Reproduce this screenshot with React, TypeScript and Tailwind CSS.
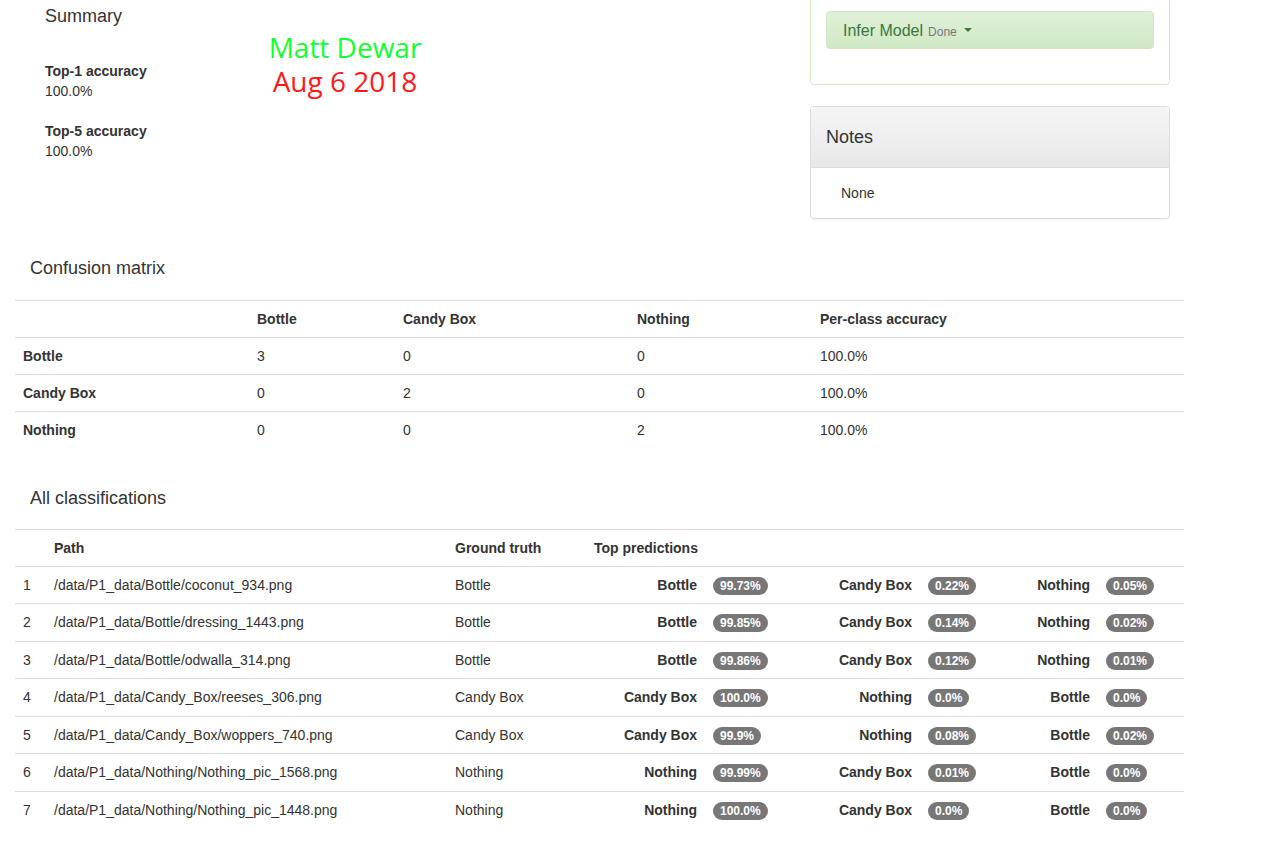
import clsx from 'clsx'

type Pred = { label: string; pct: string }
type Row = { path: string; truth: string; preds: Pred[] }

const classes = ['Bottle', 'Candy Box', 'Nothing']

const matrix = [
  [3, 0, 0],
  [0, 2, 0],
  [0, 0, 2],
]

const rows: Row[] = [
  {
    path: '/data/P1_data/Bottle/coconut_934.png',
    truth: 'Bottle',
    preds: [
      { label: 'Bottle', pct: '99.73%' },
      { label: 'Candy Box', pct: '0.22%' },
      { label: 'Nothing', pct: '0.05%' },
    ],
  },
  {
    path: '/data/P1_data/Bottle/dressing_1443.png',
    truth: 'Bottle',
    preds: [
      { label: 'Bottle', pct: '99.85%' },
      { label: 'Candy Box', pct: '0.14%' },
      { label: 'Nothing', pct: '0.02%' },
    ],
  },
  {
    path: '/data/P1_data/Bottle/odwalla_314.png',
    truth: 'Bottle',
    preds: [
      { label: 'Bottle', pct: '99.86%' },
      { label: 'Candy Box', pct: '0.12%' },
      { label: 'Nothing', pct: '0.01%' },
    ],
  },
  {
    path: '/data/P1_data/Candy_Box/reeses_306.png',
    truth: 'Candy Box',
    preds: [
      { label: 'Candy Box', pct: '100.0%' },
      { label: 'Nothing', pct: '0.0%' },
      { label: 'Bottle', pct: '0.0%' },
    ],
  },
  {
    path: '/data/P1_data/Candy_Box/woppers_740.png',
    truth: 'Candy Box',
    preds: [
      { label: 'Candy Box', pct: '99.9%' },
      { label: 'Nothing', pct: '0.08%' },
      { label: 'Bottle', pct: '0.02%' },
    ],
  },
  {
    path: '/data/P1_data/Nothing/Nothing_pic_1568.png',
    truth: 'Nothing',
    preds: [
      { label: 'Nothing', pct: '99.99%' },
      { label: 'Candy Box', pct: '0.01%' },
      { label: 'Bottle', pct: '0.0%' },
    ],
  },
  {
    path: '/data/P1_data/Nothing/Nothing_pic_1448.png',
    truth: 'Nothing',
    preds: [
      { label: 'Nothing', pct: '100.0%' },
      { label: 'Candy Box', pct: '0.0%' },
      { label: 'Bottle', pct: '0.0%' },
    ],
  },
]

const cell = 'border-t border-[#ddd] px-2 align-middle'

function Badge({ children }: { children: string }) {
  return (
    <span className="inline-block rounded-[10px] bg-[#777] px-[7px] py-[3px] text-[12px] font-bold leading-none text-white">
      {children}
    </span>
  )
}

export default function App() {
  return (
    <div className="min-h-[856px] bg-white px-[15px] font-['Liberation_Sans',Arial,sans-serif] text-[14px] leading-[20px] text-[#333]">
      <div className="flex">
        <div className="relative w-[795px]">
          <div className="pl-[30px] pt-[6px]">
            <h4 className="text-[18px] leading-[20px]">Summary</h4>
            <div className="mt-[35px]">
              <div className="font-bold">Top-1 accuracy</div>
              <div>100.0%</div>
            </div>
            <div className="mt-[20px]">
              <div className="font-bold">Top-5 accuracy</div>
              <div>100.0%</div>
            </div>
          </div>
          {/* name / date stamp */}
          <div className="absolute left-[230px] top-[30px] w-[200px] text-center font-['Open_Sans',sans-serif] text-[28px] leading-[34px]">
            <div className="text-[#12ff30]">Matt Dewar</div>
            <div className="text-[#ff1a1a]">Aug 6 2018</div>
          </div>
        </div>

        <div className="w-[360px]">
          <div className="-mt-[10px] rounded-b-[4px] border border-[#d6e9c6] px-[15px] pb-[35px] pt-[20px]">
            <div className="flex h-[38px] items-center rounded-[4px] border border-[#cfe6c4] bg-gradient-to-b from-[#dff0d8] to-[#d0e9c5] pl-[16px]">
              <span className="mt-[1px] text-[16px] text-[#3c763d]">Infer Model</span>
              <span className="ml-[5px] mt-[3px] text-[12px] text-[#777]">Done</span>
              <span className="ml-[7px] h-0 w-0 border-x-[4px] border-t-[4px] border-x-transparent border-t-[#3c763d]" />
            </div>
          </div>

          <div className="mt-[21px] overflow-hidden rounded-[4px] border border-[#ddd] shadow-[0_1px_1px_rgba(0,0,0,0.05)]">
            <div className="flex h-[61px] items-center border-b border-[#ddd] bg-gradient-to-b from-[#f5f5f5] to-[#e8e8e8] px-[15px]">
              <h3 className="text-[18px] text-[#333]">Notes</h3>
            </div>
            <div className="py-[15px] pl-[30px]">None</div>
          </div>
        </div>
      </div>

      <h4 className="mt-[39px] pl-[15px] text-[18px] leading-[20px]">Confusion matrix</h4>
      <table className="mt-[22px] w-[1169px] table-fixed border-collapse">
        <colgroup>
          <col className="w-[234px]" />
          <col className="w-[146px]" />
          <col className="w-[234px]" />
          <col className="w-[183px]" />
          <col />
        </colgroup>
        <thead>
          <tr className="h-[37px]">
            <th className={cell} />
            {classes.map((c) => (
              <th key={c} className={clsx(cell, 'text-left')}>
                {c}
              </th>
            ))}
            <th className={clsx(cell, 'text-left')}>Per-class accuracy</th>
          </tr>
        </thead>
        <tbody>
          {classes.map((c, i) => (
            <tr key={c} className="h-[37px]">
              <th className={clsx(cell, 'text-left')}>{c}</th>
              {matrix[i].map((v, j) => (
                <td key={j} className={cell}>
                  {v}
                </td>
              ))}
              <td className={cell}>100.0%</td>
            </tr>
          ))}
        </tbody>
      </table>

      <h4 className="mt-[39px] pl-[15px] text-[18px] leading-[20px]">All classifications</h4>
      <table className="mt-[21px] w-[1169px] table-fixed border-collapse">
        <colgroup>
          <col className="w-[31px]" />
          <col className="w-[401px]" />
          <col className="w-[139px]" />
          <col className="w-[119px]" />
          <col className="w-[80px]" />
          <col className="w-[135px]" />
          <col className="w-[79px]" />
          <col className="w-[99px]" />
          <col />
        </colgroup>
        <thead>
          <tr className="h-[37px]">
            <th className={cell} />
            <th className={clsx(cell, 'text-left')}>Path</th>
            <th className={clsx(cell, 'text-left')}>Ground truth</th>
            <th className={clsx(cell, 'text-left')} colSpan={6}>
              Top predictions
            </th>
          </tr>
        </thead>
        <tbody>
          {rows.map((r, i) => (
            <tr key={r.path} className="h-[37.5px]">
              <td className={cell}>{i + 1}</td>
              <td className={cell}>{r.path}</td>
              <td className={cell}>{r.truth}</td>
              {r.preds.map((p) => [
                <td key={p.label} className={clsx(cell, 'text-right font-bold')}>
                  {p.label}
                </td>,
                <td key={p.label + '-pct'} className={cell}>
                  <Badge>{p.pct}</Badge>
                </td>,
              ])}
            </tr>
          ))}
        </tbody>
      </table>
    </div>
  )
}
